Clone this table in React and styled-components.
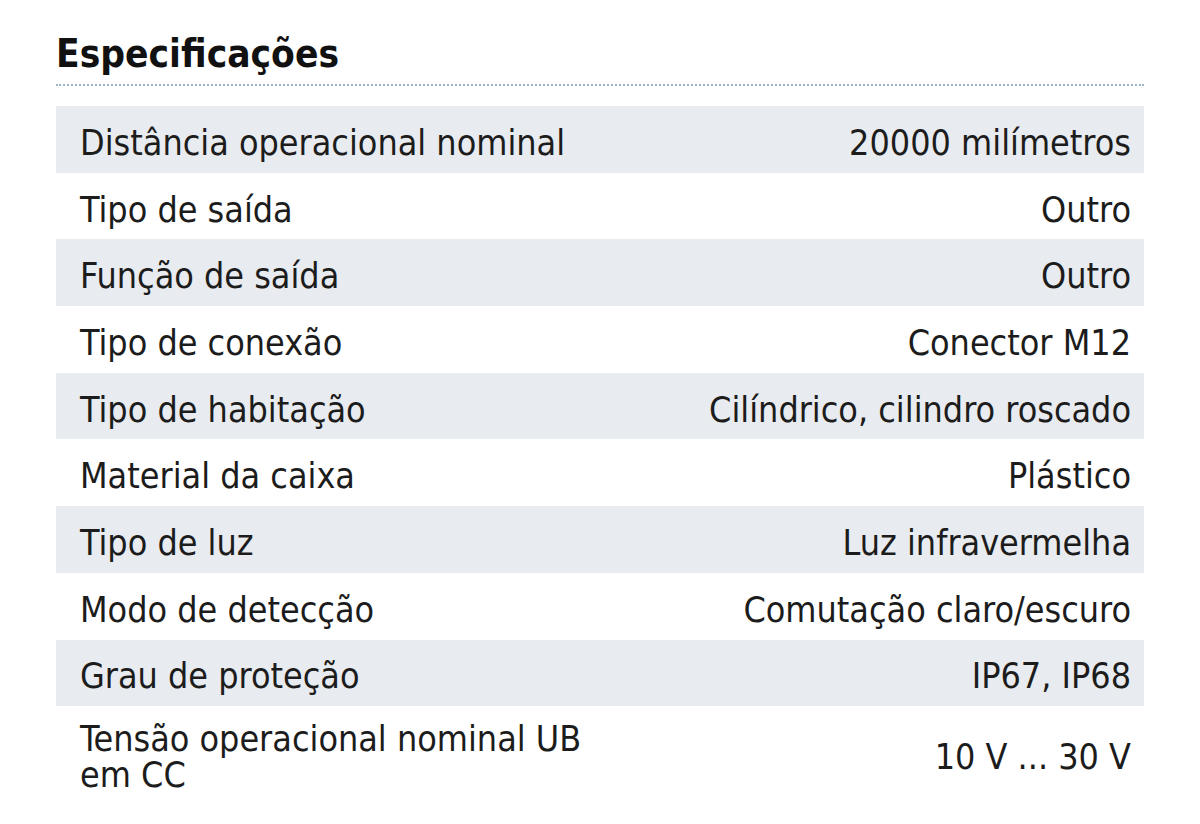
import React from 'react';
import styled, { createGlobalStyle } from 'styled-components';

const GlobalStyle = createGlobalStyle`
  body {
    margin: 0;
    background: #fff;
    font-family: "DejaVu Sans Condensed", "DejaVu Sans", sans-serif;
    color: #1c1c1c;
  }
`;

// Define styled components
const Page = styled.div`
  width: 1200px;
  height: 824px;
  padding: 30px 56px 0 56px;
  box-sizing: border-box;
`;

const Title = styled.h2`
  margin: 0;
  font-size: 38.5px;
  font-weight: bold;
  line-height: 48px;
  padding-bottom: 6px;
  border-bottom: 2px dotted #9fb3c8;
  color: #111;
`;

const Table = styled.div`
  margin-top: 20px;
  display: flex;
  flex-direction: column;
`;

const Row = styled.div`
  display: grid;
  grid-template-columns: 1fr 1fr;
  align-items: center;
  box-sizing: border-box;
  padding-top: 7px;
  min-height: ${(p) => (p.tall ? '94px' : '66.7px')};
  background: ${(p) => (p.shaded ? '#e8ebef' : 'transparent')};
  font-size: 35.6px;
  line-height: 36px;
`;

const Label = styled.div`
  padding-left: 24px;
  padding-right: 10px;
`;

const Value = styled.div`
  text-align: right;
  padding-right: 13px;
`;

const specs = [
  ['Distância operacional nominal', '20000 milímetros'],
  ['Tipo de saída', 'Outro'],
  ['Função de saída', 'Outro'],
  ['Tipo de conexão', 'Conector M12'],
  ['Tipo de habitação', 'Cilíndrico, cilindro roscado'],
  ['Material da caixa', 'Plástico'],
  ['Tipo de luz', 'Luz infravermelha'],
  ['Modo de detecção', 'Comutação claro/escuro'],
  ['Grau de proteção', 'IP67, IP68'],
  ['Tensão operacional nominal UB em CC', '10 V ... 30 V'],
];

const App = () => {
  return (
    <>
      <GlobalStyle />
      <Page>
        <Title>Especificações</Title>
        <Table>
          {specs.map(([label, value], index) => (
            <Row key={label} shaded={index % 2 === 0} tall={index === specs.length - 1}>
              <Label>{label}</Label>
              <Value>{value}</Value>
            </Row>
          ))}
        </Table>
      </Page>
    </>
  );
};

export default App;
